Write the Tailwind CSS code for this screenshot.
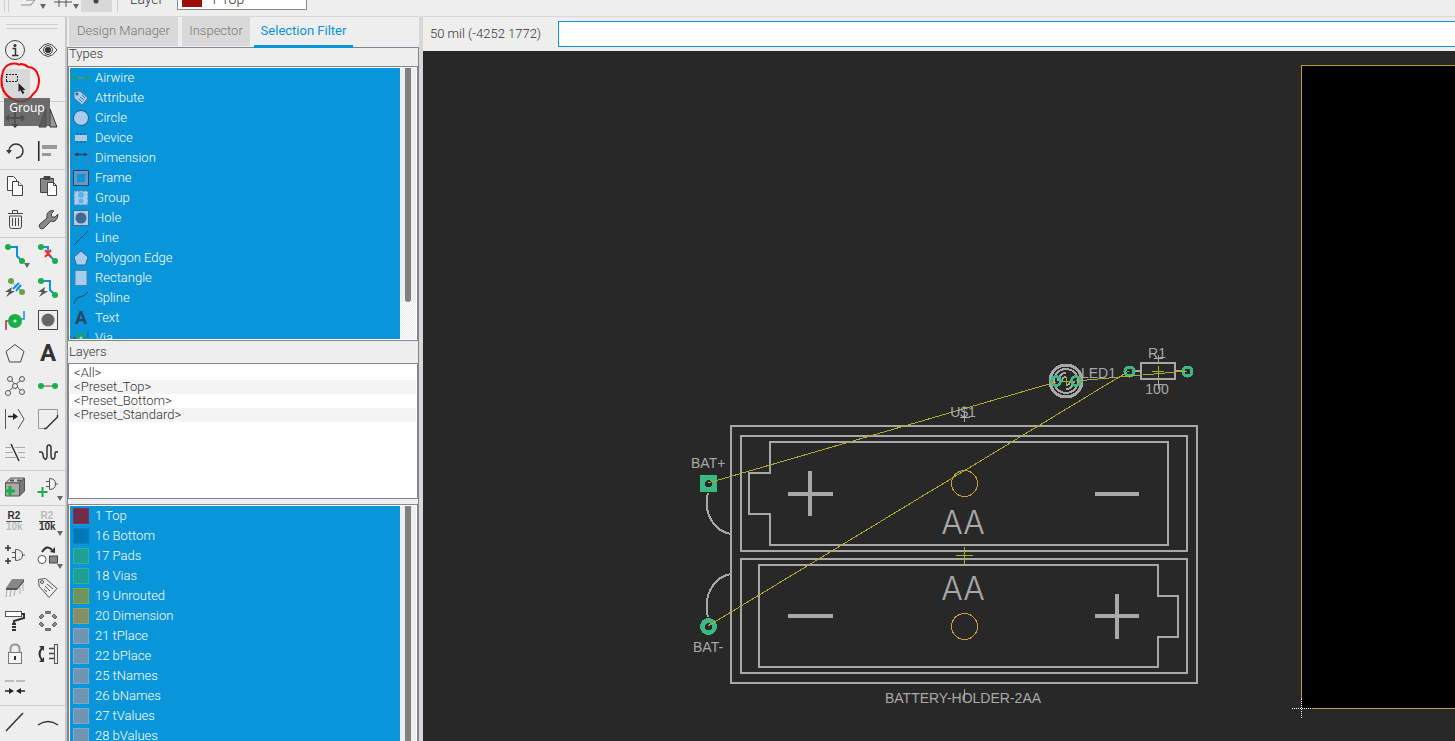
<!doctype html>
<html lang="en">

<head>
    <meta charset="UTF-8">
    <meta name="viewport" content="width=device-width, initial-scale=1.0">
    <title>Board editor</title>
    <script src="https://cdn.jsdelivr.net/npm/@tailwindcss/browser@4"></script>
</head>

<body class="h-screen flex flex-col overflow-hidden bg-[#eeeeee] text-[#333333] font-['Roboto',sans-serif] font-light text-[13px]">
    <!--top toolbar, scrolled half out of view-->
    <header class="h-[17px] shrink-0 overflow-hidden border-b border-[#d8d8d8]">
        <div class="h-[26px] -mt-[14px] flex items-center">
            <div class="w-[5px] h-full ml-1 border-x border-[#cfcfcf]"></div>
            <button class="ml-2 h-full" aria-label="Flip">
                <svg class="w-8 h-[26px]" viewBox="0 0 32 26" fill="none" stroke="#8a8a8a"><path d="M4 19h10l6-8M9 14h8" /><path d="M23 18h6l-3 5z" fill="#666" stroke="none" /></svg>
            </button>
            <button class="ml-1 h-full" aria-label="Grid">
                <svg class="w-7 h-[26px]" viewBox="0 0 28 26" fill="none" stroke="#555"><path d="M1 16h18M6 4v17M13 4v17" /><path d="M20 18h6l-3 5z" fill="#666" stroke="none" /></svg>
            </button>
            <button class="w-[31px] h-full bg-[#d8d8d8]" aria-label="Snap">
                <svg class="w-[31px] h-[26px]" viewBox="0 0 31 26"><circle cx="15" cy="15" r="2.5" fill="#444" /></svg>
            </button>
            <div class="ml-[5px] h-full border-l border-[#cfcfcf]"></div>
            <label for="layer" class="ml-3 w-[47px] text-sm">Layer</label>
            <div class="flex items-center w-[130px] h-[22px] px-1 bg-white border border-[#8c8c8c]">
                <span class="w-5 h-4 bg-[#a00a0a]"></span>
                <select id="layer" class="ml-2 flex-1 appearance-none outline-none text-sm">
                    <option>1 Top</option>
                    <option>16 Bottom</option>
                </select>
            </div>
        </div>
    </header>

    <div class="flex flex-1 min-h-0">
        <!--tool palette-->
        <nav class="relative w-[67px] shrink-0 border-r-2 border-[#c8c8c8] overflow-hidden">
            <div class="mt-[7px] mb-[5px] ml-[6px] mr-[7px] h-[5px] border-y border-[#cfcfcf]"></div>
            <div class="grid grid-cols-[33px_32px] auto-rows-[33px] pb-px border-b border-[#cccccc]">
                <button aria-label="Info"><svg class="w-[33px] h-[33px]" viewBox="0 0 33 33"><circle cx="15" cy="16" r="9.5" fill="none" stroke="#444" /><circle cx="15" cy="11.500" r="1.500" fill="#333" /><path d="M12.500 14.500h3v7M12 21.500h6.500" fill="none" stroke="#333" stroke-width="1.500" /></svg></button>
                <button aria-label="Show"><svg class="w-[33px] h-[33px]" viewBox="0 0 33 33" fill="none" stroke="#444"><path d="M6 16q9-13 18 0q-9 13-18 0z" /><circle cx="15" cy="16" r="4.500" /><circle cx="15" cy="16" r="2.800" fill="#333" /></svg></button>
                <button class="bg-[#d8d8d8] w-7 h-[29px] mt-[2px] ml-[2px]" aria-label="Group"><svg class="w-7 h-[29px]" viewBox="2 2 28 29"><path d="M6 7.500h12M6 14.500h12M6.500 9v5M17.500 9v5" fill="none" stroke="#222" stroke-dasharray="2 1" /><path d="M18.500 16v9l2-2 2 4 2-1-2-3h3z" fill="#222" /></svg></button>
            </div>
            <div class="grid grid-cols-[33px_32px] auto-rows-[33px] pb-px border-b border-[#cccccc]">
                <button aria-label="Move"><svg class="w-[33px] h-[33px]" viewBox="0 0 33 33" fill="#333"><path d="M7 15h16v2H7zM14 8h2v16h-2z" /><path d="M5 16l4-4v8zM25 16l-4-4v8zM15 6l-4 4h8zM15 26l-4-4h8z" /></svg></button>
                <button aria-label="Mirror"><svg class="w-[33px] h-[33px]" viewBox="0 0 33 33" stroke="#333"><path d="M13 7v18H6z" fill="#888" /><path d="M17 7v18h7z" fill="#999" /></svg></button>
                <button aria-label="Rotate"><svg class="w-[33px] h-[33px]" viewBox="0 0 33 33"><path d="M9 16a7 7 0 1 1 7 7" fill="none" stroke="#333" stroke-width="1.500" /><path d="M6 15h6l-3 4z" fill="#333" /></svg></button>
                <button aria-label="Align"><svg class="w-[33px] h-[33px]" viewBox="0 0 33 33"><path d="M5 6h1.500v20H5z" fill="#222" /><path d="M9 10h15v4H9zM9 18h9v3H9z" fill="#999" /></svg></button>
            </div>
            <div class="grid grid-cols-[33px_32px] auto-rows-[33px] pb-px border-b border-[#cccccc]">
                <button aria-label="Copy"><svg class="w-[33px] h-[33px]" viewBox="0 0 33 33" fill="#fff" stroke="#444"><path d="M7.500 6.500h6l3 3v11h-9z" /><path d="M12.500 11.500h6l4 4v10h-10z" /><path d="M18.500 11.500v4h4" /></svg></button>
                <button aria-label="Paste"><svg class="w-[33px] h-[33px]" viewBox="0 0 33 33" stroke="#444"><path d="M7.500 8.500h13v14h-13z" fill="#888" /><path d="M11 6.500h6v3h-6z" fill="#444" /><path d="M14.500 12.500h6l3 3v10h-9z" fill="#fff" /><path d="M20.500 12.500v3h3" fill="none" /></svg></button>
                <button aria-label="Delete"><svg class="w-[33px] h-[33px]" viewBox="0 0 33 33" fill="none" stroke="#444"><path d="M8 10.500h15M12.500 10V7.500h5V10M9.500 13v10q0 2.500 2 2.500h8q2 0 2-2.500V13zM12.500 15v8M15.500 15v8M18.500 15v8" /></svg></button>
                <button aria-label="Change"><svg class="w-[33px] h-[33px]" viewBox="0 0 33 33"><path d="M7 21l7-6q-1-5 3-7 2-1 4 0l-3 3 1 3 3 0 3-3q0 5-3 7-2 1-4 0l-7 7q-2 2-4 0-2-2 0-4z" fill="#888" stroke="#444" /></svg></button>
            </div>
            <div class="grid grid-cols-[33px_32px] auto-rows-[33px] pb-px border-b border-[#cccccc]">
                <button aria-label="Route"><svg class="w-[33px] h-[33px]" viewBox="0 0 33 33"><path d="M8 9h9v9l5 5" fill="none" stroke="#1090e0" stroke-width="2" /><g fill="#18b04a"><circle cx="8" cy="9" r="3" /><circle cx="22" cy="23" r="3" /></g><path d="M24 25h6l-3 5z" fill="#666" /></svg></button>
                <button aria-label="Ripup"><svg class="w-[33px] h-[33px]" viewBox="0 0 33 33"><path d="M8 9h7v7l7 7" fill="none" stroke="#1090e0" stroke-width="2" /><g fill="#18b04a"><circle cx="8" cy="9" r="3" /><circle cx="22" cy="23" r="3" /></g><path d="M12 12l6 7M18 12l-6 7" stroke="#f03030" stroke-width="2" /></svg></button>
                <button aria-label="Autoroute airwire"><svg class="w-[33px] h-[33px]" viewBox="0 0 33 33"><path d="M11 10l11 11" stroke="#80a8c0" /><path d="M13 18l6-6M16 20l5-6" stroke="#1090e0" stroke-width="2" /><g fill="#6f9f40"><circle cx="11" cy="10" r="3" /><circle cx="22" cy="21" r="3" /></g><path d="M12 16l-7 5h4l-3 5 9-6h-4z" fill="#555" /></svg></button>
                <button aria-label="Quick route"><svg class="w-[33px] h-[33px]" viewBox="0 0 33 33"><path d="M8 10h9v9l5 5" fill="none" stroke="#1090e0" stroke-width="2" /><g fill="#18b04a"><circle cx="8" cy="10" r="3" /><circle cx="22" cy="24" r="3" /></g><path d="M12 16l-7 5h4l-3 5 9-6h-4z" fill="#555" /></svg></button>
                <button aria-label="Via"><svg class="w-[33px] h-[33px]" viewBox="0 0 33 33" fill="none"><path d="M6 26V17h5" stroke="#b03030" stroke-width="1.500" /><path d="M19 15h5V7" stroke="#1090e0" stroke-width="1.500" /><circle cx="15" cy="17" r="7" fill="#18b04a" /><circle cx="15" cy="17" r="1.500" fill="#dfd" /></svg></button>
                <button aria-label="Hole"><svg class="w-[33px] h-[33px]" viewBox="0 0 33 33"><rect x="5.500" y="6.500" width="19" height="19" fill="none" stroke="#444" /><circle cx="15" cy="16" r="6.500" fill="#666" /></svg></button>
                <button aria-label="Polygon"><svg class="w-[33px] h-[33px]" viewBox="0 0 33 33"><path d="M15 7.500l9 7-3.500 10.500h-11L6 14.500z" fill="none" stroke="#444" /></svg></button>
                <button aria-label="Text" class="text-left pl-[7px] font-bold text-[24px] leading-[33px] text-[#333]">A</button>
                <button aria-label="Ratsnest"><svg class="w-[33px] h-[33px]" viewBox="0 0 33 33" fill="#eee" stroke="#555"><path d="M10 9l12 13M22 9L8 22" /><circle cx="10" cy="9" r="2.500" /><circle cx="22" cy="9" r="2.500" /><circle cx="8" cy="23" r="2.500" /><circle cx="22" cy="22" r="2.500" /><circle cx="15" cy="16" r="2.500" /></svg></button>
                <button aria-label="Airwire"><svg class="w-[33px] h-[33px]" viewBox="0 0 33 33"><path d="M8 16h14" stroke="#888" stroke-width="1.500" /><g fill="#18b04a"><circle cx="8" cy="16" r="3" /><circle cx="22" cy="16" r="3" /></g></svg></button>
                <button aria-label="Split"><svg class="w-[33px] h-[33px]" viewBox="0 0 33 33" fill="none" stroke="#555"><path d="M5.500 6v20M18 6l6 10-6 10" /><path d="M8 13.500h6" stroke="#222" stroke-width="1.500" /><path d="M13 10l5 3.500-5 3.500z" fill="#222" stroke="none" /></svg></button>
                <button aria-label="Miter"><svg class="w-[33px] h-[33px]" viewBox="0 0 33 33" fill="none"><path d="M11 25.500H5.500v-19h19V12" stroke="#999" /><path d="M11 25.500h2L24.500 14v-2" stroke="#333" stroke-width="1.500" /></svg></button>
                <button aria-label="Slice"><svg class="w-[33px] h-[33px]" viewBox="0 0 33 33" fill="none"><path d="M5 11.500h6M15 11.500h10M5 16.500h8M18 16.500h7M5 21.500h11M20 21.500h5" stroke="#aaa" /><path d="M11 8l8 17" stroke="#333" stroke-width="1.500" /></svg></button>
                <button aria-label="Meander"><svg class="w-[33px] h-[33px]" viewBox="0 0 33 33"><path d="M6 16h2q2 0 2 3t2 4 2-4v-7q0-3 2-3t2 3v7q0 4 2 4t2-4 2-3h1" fill="none" stroke="#333" stroke-width="1.500" /></svg></button>
            </div>
            <div class="grid grid-cols-[33px_32px] auto-rows-[33px] pb-px border-b border-[#cccccc]">
                <button aria-label="Add part"><svg class="w-[33px] h-[33px]" viewBox="0 0 33 33" stroke="#555"><path d="M5.500 12l5-5h14l-5 5z" fill="#ccc" /><path d="M5.500 12h14v13h-14z" fill="#aaa" /><path d="M19.500 12l5-5v13l-5 5z" fill="#777" /><path d="M10 9.500h4M17 9.500h4" stroke-width="2" /><path d="M10 15v10M5 20h10" stroke="#18b04a" stroke-width="3" /></svg></button>
                <button aria-label="Add gate"><svg class="w-[33px] h-[33px]" viewBox="0 0 33 33" fill="none" stroke="#555"><path d="M16.500 7.500v11q6 0 6-5.500t-6-5.500M13 10.500h3M13 15.500h3M22 13h3" /><path d="M9.500 16v10M4.500 21h10" stroke="#18b04a" stroke-width="2" /><path d="M24 25h6l-3 5z" fill="#666" stroke="none" /></svg></button>
            </div>
            <div class="grid grid-cols-[33px_32px] auto-rows-[33px] pb-px border-b border-[#cccccc] font-['Liberation_Sans',sans-serif] font-bold text-[10px] leading-[10px]">
                <button aria-label="Name" class="w-4 ml-[6px] mb-[3px]"><span class="block border-b border-[#555] text-[#333]">R2</span><span class="block text-[#bbb]">10k</span></button>
                <button aria-label="Value" class="relative w-4 ml-[6px] mb-[3px]"><span class="block border-b border-[#333] text-[#bbb]">R2</span><span class="block text-[#333]">10k</span><svg class="absolute left-[18px] top-[25px] w-[6px] h-[5px]" viewBox="0 0 6 5"><path d="M0 0h6L3 5z" fill="#666" /></svg></button>
                <button aria-label="Smash"><svg class="w-[33px] h-[33px]" viewBox="0 0 33 33" fill="none" stroke="#555"><path d="M15.500 10.500v11q7 0 7-5.500t-7-5.500M12 13.500h3M12 18.500h3M22 16h3" /><path d="M8 6v6M5 9h6M8 19v6M5 22h6" stroke="#333" stroke-width="1.500" /></svg></button>
                <button aria-label="Replace"><svg class="w-[33px] h-[33px]" viewBox="0 0 33 33"><circle cx="9" cy="20.500" r="4" fill="#fff" stroke="#555" /><rect x="16.500" y="17" width="8" height="7" fill="#888" stroke="#444" /><path d="M9 13q5-8 10-2" fill="none" stroke="#333" stroke-width="2" /><path d="M17 13l5 1V8z" fill="#333" /><path d="M24 25h6l-3 5z" fill="#666" /></svg></button>
                <button aria-label="Package"><svg class="w-[33px] h-[33px]" viewBox="0 0 33 33"><path d="M12 7h12l-7 9H6z" fill="#888" /><path d="M6 16h11l7-9v3l-7 8H6z" fill="#555" /><path d="M7 18l-1 7M11 18l-1 7M15 18l-1 6M20 15v7M23 12v7" fill="none" stroke="#aaa" /></svg></button>
                <button aria-label="Attribute"><svg class="w-[33px] h-[33px]" viewBox="0 0 33 33" fill="none" stroke="#555"><path d="M5.500 7.500l7-1 11.500 10-8 9L6 14z" /><circle cx="9" cy="10" r="1.500" /><path d="M12 14l5 5M14 12l6 5M11 17l3 3" /></svg></button>
                <button aria-label="Paint roller"><svg class="w-[33px] h-[33px]" viewBox="0 0 33 33" fill="none"><rect x="5.500" y="6.500" width="16" height="5" fill="#fff" stroke="#555" /><path d="M22 9h2v4l-10 3v3" stroke="#333" stroke-width="2" /><path d="M14 18v9" stroke="#333" stroke-width="4" stroke-dasharray="2 1" /></svg></button>
                <button aria-label="Pin swap"><svg class="w-[33px] h-[33px]" viewBox="0 0 33 33" fill="#888" stroke="#666"><path d="M12.500 6.500h5v2h-5zM12.500 23.500h5v2h-5zM6 12l3-3 2 2-3 3zM24 12l-3-3-2 2 3 3zM6 19l3 3 2-2-3-3zM24 19l-3 3-2-2 3-3z" /></svg></button>
                <button aria-label="Lock"><svg class="w-[33px] h-[33px]" viewBox="0 0 33 33" fill="none"><path d="M10.500 15v-4q0-4.500 4.500-4.500t4.500 4.500v4" stroke="#999" stroke-width="2" /><rect x="8.500" y="14.500" width="13" height="11" fill="#f4f4f4" stroke="#777" /><path d="M15 18v4" stroke="#333" stroke-width="2" /></svg></button>
                <button aria-label="Gate swap"><svg class="w-[33px] h-[33px]" viewBox="0 0 33 33" fill="none"><path d="M9 10q-5 6 0 12" stroke="#333" stroke-width="2" /><path d="M6 8h5v5zM6 24h5v-5z" fill="#333" /><rect x="21.500" y="6.500" width="3" height="19" stroke="#555" /><path d="M16 10.500h5M16 15.500h5M16 20.500h5" stroke="#444" stroke-width="1.500" /></svg></button>
                <button aria-label="Join"><svg class="w-[33px] h-[33px]" viewBox="0 0 33 33"><path d="M5 10h9M16 10h9" stroke="#aaa" stroke-width="1.500" /><path d="M5 20h5M20 20h5" stroke="#222" stroke-width="1.500" /><path d="M9 17l5 3-5 3zM21 17l-5 3 5 3z" fill="#222" /></svg></button>
            </div>
            <div class="grid grid-cols-[33px_32px] auto-rows-[33px]">
                <button aria-label="Line"><svg class="w-[33px] h-[33px]" viewBox="0 0 33 33"><path d="M6 25L23 7" stroke="#333" stroke-width="1.500" /></svg></button>
                <button aria-label="Arc"><svg class="w-[33px] h-[33px]" viewBox="0 0 33 33"><path d="M5 19q10-7 20 0" fill="none" stroke="#333" stroke-width="1.500" /></svg></button>
            </div>

            <!--marker and tooltip over the group tool-->
            <svg class="absolute left-0 top-[43px] w-[42px] h-[44px] pointer-events-none" viewBox="0 60 42 44" fill="none" stroke="#ff0000" stroke-width="2"><path d="M20 65C10 61 3 66 2 76C0 88 5 96 14 100C21 103 29 101 33 94C39 90 40 80 38 75C36 69 32 67 28 67C25 64 22 64 20 64" /></svg>
            <div role="tooltip" class="absolute left-1 top-[81px] w-[46px] h-7 text-center font-normal text-[12px] leading-[19px] text-white bg-[#555555]/85 font-['Noto_Sans',sans-serif]">Group</div>
        </nav>

        <!--selection filter panel-->
        <aside class="w-[352px] shrink-0 flex flex-col">
            <div class="flex h-[31px] shrink-0 gap-1 pl-[2px] border-b border-[#80868f]">
                <button class="w-[109px] h-[29px] pb-[2px] bg-[#d9d9d9] text-[#777777]">Design Manager</button>
                <button class="w-[68px] h-[29px] pb-[2px] bg-[#d9d9d9] text-[#777777]">Inspector</button>
                <button class="w-[99px] h-[31px] pb-px font-normal text-[#0895da] border-b-3 border-[#0895da]">Selection Filter</button>
            </div>
            <div class="flex-1 min-h-0 flex flex-col border-x border-[#80868f]">
                <h2 class="h-[18px] shrink-0 pl-px leading-[12px]">Types</h2>
                <div class="flex h-[275px] shrink-0 p-px border border-[#80868f] bg-white">
                    <ul class="flex-1 overflow-hidden pl-[3px] bg-[#0895da] text-white leading-5" role="listbox" aria-label="Types">
                        <li class="flex h-5 items-center gap-[6px]"><svg class="w-4 h-4" viewBox="0 0 16 16"><path d="M3 8h10" stroke="#5c8cb0" stroke-width="1.500" /><circle cx="2.500" cy="8" r="2.500" fill="#12a080" /><circle cx="13.500" cy="8" r="2.500" fill="#12a080" /></svg>Airwire</li>
                        <li class="flex h-5 items-center gap-[6px]"><svg class="w-4 h-4" viewBox="0 0 16 16"><path d="M1 2l6-1 8 7-6 7-8-7z" fill="#a8ccec" stroke="#4878a0" /><circle cx="4" cy="4" r="1.500" fill="#2c6c9c" /><path d="M6 9l3 3M7 7l4 3M9 5l3 3" stroke="#4878a0" /></svg>Attribute</li>
                        <li class="flex h-5 items-center gap-[6px]"><svg class="w-4 h-4" viewBox="0 0 16 16"><circle cx="8" cy="8" r="7.500" fill="#a8ccec" stroke="#1c5c8c" /></svg>Circle</li>
                        <li class="flex h-5 items-center gap-[6px]"><svg class="w-4 h-4" viewBox="0 0 16 16"><path d="M4.500 3v10M8 3v10M11.500 3v10" stroke="#38608a" stroke-width="1.500" /><rect x="2" y="5" width="12" height="6" fill="#a8ccec" /></svg>Device</li>
                        <li class="flex h-5 items-center gap-[6px]"><svg class="w-4 h-4" viewBox="0 0 16 16"><path d="M.5 0v16M15.500 0v16" stroke="#4c80ac" /><path d="M3 4.500h10" stroke="#1c4468" stroke-width="1.500" /><path d="M1 4.500l4-2v4zM15 4.500l-4-2v4z" fill="#1c4468" /></svg>Dimension</li>
                        <li class="flex h-5 items-center gap-[6px]"><svg class="w-4 h-4" viewBox="0 0 16 16"><path d="M.5.5h15v15H.5zM4 4v8h8V4z" fill="#6c94bc" fill-rule="evenodd" /><path d="M.5.5h15v15H.5z" fill="none" stroke="#1c4870" /></svg>Frame</li>
                        <li class="flex h-5 items-center gap-[6px]"><svg class="w-4 h-4" viewBox="0 0 16 16"><rect x="1" y="1" width="14" height="14" fill="#a8ccec" stroke="#4c80ac" stroke-dasharray="3 1" /><circle cx="8" cy="5" r="3" fill="#60b0e8" /><circle cx="8" cy="11" r="2.500" fill="#60b0e8" /></svg>Group</li>
                        <li class="flex h-5 items-center gap-[6px]"><svg class="w-4 h-4" viewBox="0 0 16 16"><rect x=".5" y=".5" width="15" height="15" fill="#a8ccec" stroke="#38709c" /><circle cx="8" cy="8" r="5.500" fill="#44688c" /></svg>Hole</li>
                        <li class="flex h-5 items-center gap-[6px]"><svg class="w-4 h-4" viewBox="0 0 16 16"><path d="M1 15L15 1" stroke="#1c4468" /></svg>Line</li>
                        <li class="flex h-5 items-center gap-[6px]"><svg class="w-4 h-4" viewBox="0 0 16 16"><path d="M8 1l7 6-2.500 8h-9L1 7z" fill="#a8ccec" stroke="#2c6c9c" /></svg>Polygon Edge</li>
                        <li class="flex h-5 items-center gap-[6px]"><svg class="w-4 h-4" viewBox="0 0 16 16"><rect x="2" y=".5" width="12" height="15" fill="#a8ccec" stroke="#4c80ac" /></svg>Rectangle</li>
                        <li class="flex h-5 items-center gap-[6px]"><svg class="w-4 h-4" viewBox="0 0 16 16"><path d="M1 14q1-6 6-7t8-5" fill="none" stroke="#1c4468" /></svg>Spline</li>
                        <li class="flex h-5 items-center gap-[6px]"><span class="w-4 text-center font-bold text-[18px] text-[#244868]">A</span>Text</li>
                        <li class="flex h-5 items-center gap-[6px]"><svg class="w-4 h-4" viewBox="0 0 16 16"><path d="M0 8h3v5" stroke="#784070" stroke-width="2" fill="none" /><path d="M15 1v7" stroke="#0878e0" stroke-width="2" /><circle cx="8" cy="8" r="5.500" fill="#12a080" /><circle cx="8" cy="8" r="1.500" fill="#8cd8d0" /></svg>Via</li>
                    </ul>
                    <div class="w-4 flex flex-col items-center bg-[repeating-conic-gradient(#e8e8e8_0_25%,#ffffff_0_50%)] bg-[length:2px_2px]">
                        <div class="w-full h-[234px] flex justify-center bg-[#eeeeee]">
                            <div class="w-[6px] h-full rounded-b-sm bg-[#808080]"></div>
                        </div>
                    </div>
                </div>
                <h2 class="h-[22px] shrink-0 pl-px leading-[21px]">Layers</h2>
                <ul class="h-[136px] shrink-0 px-px py-[2px] border border-[#80868f] bg-white leading-[14px]" role="listbox" aria-label="Layer presets">
                    <li class="h-[14px] pl-1">&lt;All&gt;</li>
                    <li class="h-[14px] pl-1 bg-[#f4f4f4]">&lt;Preset_Top&gt;</li>
                    <li class="h-[14px] pl-1">&lt;Preset_Bottom&gt;</li>
                    <li class="h-[14px] pl-1 bg-[#f4f4f4]">&lt;Preset_Standard&gt;</li>
                </ul>
                <div class="mt-[5px] flex-1 min-h-0 flex p-px pb-0 border border-b-0 border-[#80868f] bg-white">
                    <ul class="flex-1 overflow-hidden pl-[3px] bg-[#0895da] text-white leading-5" role="listbox" aria-label="Layers">
                        <li class="flex h-5 items-center gap-[6px]"><span class="w-4 h-4 bg-[#702c48] border border-[#8c2c50]"></span>1 Top</li>
                        <li class="flex h-5 items-center gap-[6px]"><span class="w-4 h-4 bg-[#0078b8] border border-[#0880c8]"></span>16 Bottom</li>
                        <li class="flex h-5 items-center gap-[6px]"><span class="w-4 h-4 bg-[#20a094] border border-[#28b4a4]"></span>17 Pads</li>
                        <li class="flex h-5 items-center gap-[6px]"><span class="w-4 h-4 bg-[#20a094] border border-[#28b4a4]"></span>18 Vias</li>
                        <li class="flex h-5 items-center gap-[6px]"><span class="w-4 h-4 bg-[#70945c] border border-[#80a858]"></span>19 Unrouted</li>
                        <li class="flex h-5 items-center gap-[6px]"><span class="w-4 h-4 bg-[#848f68] border border-[#98a068]"></span>20 Dimension</li>
                        <li class="flex h-5 items-center gap-[6px]"><span class="w-4 h-4 bg-[#7094b4] border border-[#80a8c8]"></span>21 tPlace</li>
                        <li class="flex h-5 items-center gap-[6px]"><span class="w-4 h-4 bg-[#7094b4] border border-[#80a8c8]"></span>22 bPlace</li>
                        <li class="flex h-5 items-center gap-[6px]"><span class="w-4 h-4 bg-[#7094b4] border border-[#80a8c8]"></span>25 tNames</li>
                        <li class="flex h-5 items-center gap-[6px]"><span class="w-4 h-4 bg-[#7094b4] border border-[#80a8c8]"></span>26 bNames</li>
                        <li class="flex h-5 items-center gap-[6px]"><span class="w-4 h-4 bg-[#7094b4] border border-[#80a8c8]"></span>27 tValues</li>
                        <li class="flex h-5 items-center gap-[6px]"><span class="w-4 h-4 bg-[#7094b4] border border-[#80a8c8]"></span>28 bValues</li>
                    </ul>
                    <div class="w-4 flex justify-center bg-[#eeeeee]">
                        <div class="w-[6px] bg-[#808080]"></div>
                    </div>
                </div>
            </div>
        </aside>

        <div class="w-1 shrink-0 bg-[#d8d8d8]"></div>

        <!--board area-->
        <main class="flex-1 min-w-0 flex flex-col">
            <div class="flex h-[34px] shrink-0 items-center">
                <label for="command" class="w-[135px] pl-[7px]">50 mil (-4252 1772)</label>
                <input id="command" type="text" class="flex-1 h-[26px] px-1 bg-white border border-r-0 border-[#0895da] outline-none">
            </div>
            <div class="flex-1 min-h-0 bg-[#282828] overflow-hidden">
                <svg class="w-full h-full" shape-rendering="crispEdges" fill="none">
                    <g transform="translate(-423 -51)">
                        <!--board outline-->
                        <rect x="1301.500" y="65.500" width="3000" height="643" fill="#000" stroke="#b89a3c" />
                        <path d="M1292 708.500h20M1301.500 699v19" stroke="#282828" />
                        <path d="M1292 708.500h20M1301.500 699v19" stroke="#fff" stroke-dasharray="1 1" />

                        <!--battery holder-->
                        <g stroke="#a8a8a8" stroke-width="2">
                            <path d="M731 426h466v257H731zM741 436h446v115H741zM741 559h446v114H741z" />
                            <path d="M770 442h398v103H770v-31h-21v-41h21z" />
                            <path d="M759 565h399v31h20v41h-20v30H759z" />
                            <path d="M708 493C703 510 712 531 731 534M731 574C712 577 703 598 708 617" />
                            <path d="M788 494h45M810 471v45M1095 494h44M788 616h45M1095 616h44M1117 594v45" stroke-width="4" />
                        </g>
                        <g stroke="#c8a03c">
                            <circle cx="964.500" cy="483.500" r="13" />
                            <circle cx="964.500" cy="626.500" r="13" />
                        </g>
                        <path d="M956 555.500h17M964.500 547v17" stroke="#a4b428" />
                        <path d="M960 417.500h10M964.500 411v11M964.500 689v11" stroke="#a8a8a8" />

                        <!--LED1 and R1-->
                        <g stroke="#a8a8a8" stroke-width="2">
                            <circle cx="1066" cy="381" r="16" stroke-width="3" />
                            <circle cx="1066" cy="381" r="12" />
                            <path d="M1058 381a8 8 0 0 1 8-8M1074 381a8 8 0 0 1-8 8M1062 381a4 4 0 0 1 4-4M1070 381a4 4 0 0 1-4 4" />
                            <path d="M1141 363h34v16h-34zM1135 371h6M1175 371h7" />
                            <path d="M1158.500 355v7M1158.500 380v9M1154 358.500h9M1154 384.500h9" stroke-width="1" />
                        </g>
                        <g stroke="#3cb882" stroke-width="3">
                            <circle cx="1056" cy="381" r="4.500" />
                            <circle cx="1076" cy="381" r="4.500" />
                            <circle cx="1129.500" cy="371.500" r="4.500" />
                            <circle cx="1187.500" cy="371.500" r="4.500" />
                        </g>
                        <path d="M700 475h17v17h-17z" fill="#3cb882" />
                        <circle cx="708.500" cy="483.500" r="3.500" fill="#282828" />
                        <circle cx="708.500" cy="626.500" r="6" stroke="#3cb882" stroke-width="5" />
                        <path d="M1062 381.500h9M1066.500 377v9M1152 371.500h12M1158.500 366v12" stroke="#a4b428" />

                        <!--airwires-->
                        <path d="M708 483L1056 382M1076 381L1187 371M708 626L1129 371" stroke="#acac30" />

                        <g fill="#a8a8a8" font-family="Liberation Sans, sans-serif" font-size="14">
                            <text x="691" y="468">BAT+</text>
                            <text x="693" y="652">BAT-</text>
                            <text x="963" y="417" text-anchor="middle">U$1</text>
                            <text x="963" y="703" text-anchor="middle">BATTERY-HOLDER-2AA</text>
                            <text x="1081" y="378">LED1</text>
                            <text x="1157" y="358" text-anchor="middle">R1</text>
                            <text x="1157" y="394" text-anchor="middle">100</text>
                            <text x="963" y="534" text-anchor="middle" font-family="Inter, sans-serif" font-size="32">AA</text>
                            <text x="963" y="600" text-anchor="middle" font-family="Inter, sans-serif" font-size="32">AA</text>
                        </g>
                    </g>
                </svg>
            </div>
        </main>
    </div>
</body>

</html>
